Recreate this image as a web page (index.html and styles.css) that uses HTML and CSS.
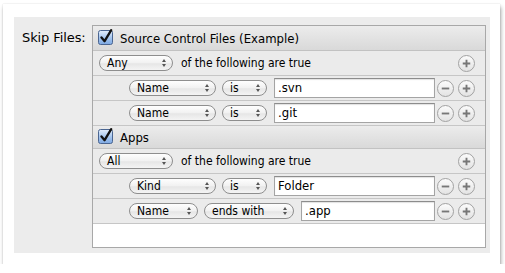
FILE: index.html
```html
<!DOCTYPE html>
<html lang="en">

<head>
    <meta charset="UTF-8">
    <title>Skip Files</title>
    <link rel="stylesheet" href="styles.css">
</head>

<body>
    <svg class="defs" width="0" height="0">
        <defs>
            <linearGradient id="checkFill" x1="0" y1="0" x2="0" y2="1">
                <stop offset="0" stop-color="#e4eefb" />
                <stop offset="0.5" stop-color="#a9c8ef" />
                <stop offset="1" stop-color="#7da8e2" />
            </linearGradient>
            <symbol id="check" viewBox="0 0 16 16">
                <rect x="0.5" y="1.5" width="14" height="14" rx="2" fill="url(#checkFill)" stroke="#4a6591" />
                <path d="M3.5 8.5 L6.6 12.2 L13.2 1.2" fill="none" stroke="#111" stroke-width="2.3" stroke-linecap="round" stroke-linejoin="round" />
            </symbol>
            <symbol id="plus" viewBox="0 0 16 16">
                <path d="M4 8 H12 M8 4 V12" stroke="#777" stroke-width="2" />
            </symbol>
            <symbol id="minus" viewBox="0 0 16 16">
                <path d="M4 8 H12" stroke="#777" stroke-width="2" />
            </symbol>
        </defs>
    </svg>

    <div class="sheet">
        <div class="panel">
            <div class="field-label">Skip Files:</div>
            <div class="rules">
                <div class="group-head">
                    <svg class="check"><use href="#check" /></svg>
                    <span>Source Control Files (Example)</span>
                </div>
                <div class="row">
                    <span class="popup w-quant">Any<i class="arrows"></i></span>
                    <span class="row-text">of the following are true</span>
                    <span class="round-btn"><svg><use href="#plus" /></svg></span>
                </div>
                <div class="row criterion">
                    <span class="popup w-attr">Name<i class="arrows"></i></span>
                    <span class="popup w-op">is<i class="arrows"></i></span>
                    <span class="value">.svn</span>
                    <span class="round-btn"><svg><use href="#minus" /></svg></span>
                    <span class="round-btn"><svg><use href="#plus" /></svg></span>
                </div>
                <div class="row criterion">
                    <span class="popup w-attr">Name<i class="arrows"></i></span>
                    <span class="popup w-op">is<i class="arrows"></i></span>
                    <span class="value">.git</span>
                    <span class="round-btn"><svg><use href="#minus" /></svg></span>
                    <span class="round-btn"><svg><use href="#plus" /></svg></span>
                </div>

                <div class="group-head short">
                    <svg class="check"><use href="#check" /></svg>
                    <span>Apps</span>
                </div>
                <div class="row">
                    <span class="popup w-quant">All<i class="arrows"></i></span>
                    <span class="row-text">of the following are true</span>
                    <span class="round-btn"><svg><use href="#plus" /></svg></span>
                </div>
                <div class="row criterion">
                    <span class="popup w-attr">Kind<i class="arrows"></i></span>
                    <span class="popup w-op">is<i class="arrows"></i></span>
                    <span class="value">Folder</span>
                    <span class="round-btn"><svg><use href="#minus" /></svg></span>
                    <span class="round-btn"><svg><use href="#plus" /></svg></span>
                </div>
                <div class="row criterion">
                    <span class="popup w-attr-sm">Name<i class="arrows"></i></span>
                    <span class="popup w-op-lg">ends with<i class="arrows"></i></span>
                    <span class="value">.app</span>
                    <span class="round-btn"><svg><use href="#minus" /></svg></span>
                    <span class="round-btn"><svg><use href="#plus" /></svg></span>
                </div>
                <div class="row empty"></div>
            </div>
        </div>
    </div>
</body>

</html>
```

FILE: styles.css
```css
body {
    margin: 0;
    padding: 4px 5px 0 3px;
    background: #fff;
    font-family: "DejaVu Sans Condensed", "DejaVu Sans", sans-serif;
    font-size: 12px;
    color: #000;
}

.defs {
    position: absolute;
    width: 0;
    height: 0;
}

.sheet {
    width: 497px;
    height: 260px;
    padding: 13px 10px 11px 11px;
    box-sizing: border-box;
    background: #fff;
    box-shadow: 1px 3px 4px rgba(0, 0, 0, 0.35), 0 0 1px rgba(0, 0, 0, 0.2);
}

.panel {
    display: flex;
    height: 100%;
    padding: 8px 4px 0 8px;
    box-sizing: border-box;
    background: #ececec;
}

.field-label {
    width: 70px;
    flex-shrink: 0;
    padding-top: 5px;
    font-family: "DejaVu Sans", sans-serif;
    font-size: 13px;
    letter-spacing: -0.1px;
}

.rules {
    width: 394px;
    height: 223px;
    border: 1px solid #a8a8a8;
    box-sizing: border-box;
    display: flex;
    flex-direction: column;
    background: #ebebeb;
}

.group-head {
    display: flex;
    align-items: center;
    gap: 6px;
    height: 25px;
    padding-left: 5px;
    box-sizing: border-box;
    border-bottom: 1px solid #c2c2c2;
    background: linear-gradient(#ececec, #d9d9d9);
    font-size: 13px;
}

.group-head.short {
    height: 23px;
}

.check {
    width: 16px;
    height: 16px;
    margin-top: -2px;
}

.row {
    display: flex;
    align-items: center;
    height: 25px;
    padding: 0 10px 0 6px;
    box-sizing: border-box;
    border-bottom: 1px solid #c6c6c6;
}

.row.criterion {
    padding-left: 36px;
    gap: 6px;
}

.row.empty {
    height: 23px;
    border-bottom: none;
    background: #fff;
}

.row-text {
    margin-left: 8px;
    flex: 1;
}

.popup {
    display: flex;
    align-items: center;
    justify-content: space-between;
    height: 16px;
    padding: 0 6px 0 7px;
    box-sizing: border-box;
    border: 1px solid #8e8e8e;
    border-radius: 8px;
    background: linear-gradient(#fefefe, #f1f1f1 50%, #e6e6e6 55%, #f4f4f4);
    line-height: 14px;
}

.w-quant {
    width: 74px;
}

.w-attr {
    width: 87px;
}

.w-op {
    width: 45px;
}

.w-attr-sm {
    width: 69px;
}

.w-op-lg {
    width: 90px;
}

.arrows {
    display: flex;
    flex-direction: column;
    gap: 2px;
}

.arrows::before,
.arrows::after {
    content: "";
    border-left: 2.5px solid transparent;
    border-right: 2.5px solid transparent;
}

.arrows::before {
    border-bottom: 3px solid #555;
}

.arrows::after {
    border-top: 3px solid #555;
}

.value {
    flex: 1;
    height: 20px;
    padding-left: 3px;
    margin-left: 1px;
    box-sizing: border-box;
    border: 1px solid #a4a4a4;
    border-top-color: #8c8c8c;
    background: #fff;
    box-shadow: inset 0 1px 1px rgba(0, 0, 0, 0.12);
    font-size: 13px;
    line-height: 18px;
}

.round-btn {
    width: 17px;
    height: 17px;
    box-sizing: border-box;
    border: 1px solid #a2a2a2;
    border-radius: 50%;
    background: linear-gradient(#fbfbfb, #e3e3e3);
    display: flex;
    align-items: center;
    justify-content: center;
    flex-shrink: 0;
}

.criterion .round-btn + .round-btn {
    margin-left: -2px;
}

.criterion .value + .round-btn {
    margin-left: -4px;
}

.round-btn svg {
    width: 15px;
    height: 15px;
}
```
